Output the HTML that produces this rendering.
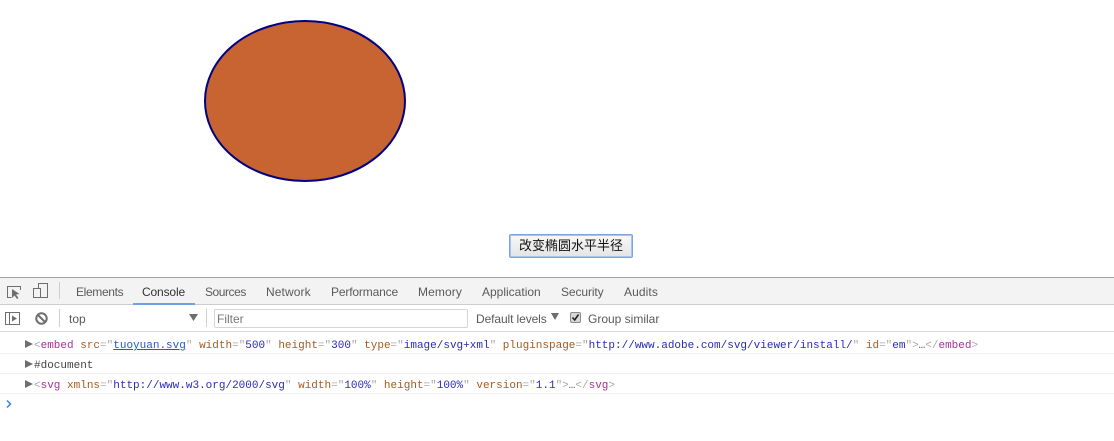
<!DOCTYPE html>
<html>
<head>
<meta charset="utf-8">
<style>
html,body{margin:0;padding:0;background:#fff;width:1114px;height:441px;overflow:hidden}
body{position:relative;font-family:"Liberation Sans","Noto Sans CJK SC",sans-serif}
.a{position:absolute;white-space:nowrap}
.t{position:absolute;top:285px;font-size:12px;line-height:14px;color:#5a5a5a;white-space:nowrap}
.m{position:absolute;left:34px;font-family:"Liberation Mono",monospace;font-size:11px;line-height:14px;white-space:pre;color:#a8a8a8}
.tag{color:#a8329a}.n{color:#a85a1c}.v{color:#2a2ab8}.arrow{position:absolute;left:25px;width:0;height:0;border-left:8px solid #6e6e6e;border-top:4px solid transparent;border-bottom:4px solid transparent}
.line{position:absolute;left:0;width:1114px;height:1px;background:#efefef}
</style>
</head>
<body>
<svg class="a" style="left:0;top:0" width="500" height="200"><ellipse cx="305" cy="101" rx="100" ry="80" fill="#c86432" stroke="#000080" stroke-width="2"/></svg>
<div class="a" style="left:509px;top:234px;width:122px;height:22px;border:1px solid #7ea3e0;box-shadow:inset 0 0 0 1px #a9c3ec;border-radius:2px;background:linear-gradient(#f8f8f8,#e4e4e4);font-size:13px;line-height:22px;text-align:center;color:#111">改变椭圆水平半径</div>

<div class="a" style="left:0;top:277px;width:1114px;height:26px;background:#f3f3f3;border-top:1px solid #a3a3a3;border-bottom:1px solid #cdcdcd"></div>
<svg class="a" style="left:0;top:278px" width="60" height="27" fill="none" stroke="#6e6e6e">
<path d="M11.500 19.500H7.500V8.500H20.500V12" stroke-width="1"/>
<path d="M12 11L12 20L14.500 17.500L17 21L18.500 20L16 16.500L19.500 16Z" fill="#6e6e6e" stroke="none"/>
<path d="M38.500 10.500V5.500H47.500V19.500H33.500V10.500H40.500V19.500" stroke-width="1"/>
<path d="M59.500 4V21" stroke="#cfcfcf"/>
</svg>
<div class="t" style="left:76px;letter-spacing:-.35px">Elements</div>
<div class="t" style="left:142px;color:#333;letter-spacing:-.15px">Console</div>
<div class="a" style="left:133px;top:303px;width:62px;height:2px;background:#6f9fe8"></div>
<div class="t" style="left:205px;letter-spacing:-.45px">Sources</div>
<div class="t" style="left:266px;letter-spacing:.1px">Network</div>
<div class="t" style="left:331px;letter-spacing:-.15px">Performance</div>
<div class="t" style="left:418px;letter-spacing:.1px">Memory</div>
<div class="t" style="left:482px">Application</div>
<div class="t" style="left:561px;letter-spacing:-.1px">Security</div>
<div class="t" style="left:624px;letter-spacing:.1px">Audits</div>

<div class="a" style="left:0;top:331px;width:1114px;height:1px;background:#dcdcdc"></div>
<svg class="a" style="left:0;top:305px" width="215" height="27" fill="none">
<rect x="5.500" y="7.500" width="14" height="12" stroke="#6e6e6e"/>
<path d="M9.500 8V19" stroke="#6e6e6e"/>
<path d="M12 10.500L17 13.500L12 16.500Z" fill="#6e6e6e"/>
<circle cx="41.500" cy="13.500" r="5.200" stroke="#6e6e6e" stroke-width="2"/>
<path d="M38 10L45 17" stroke="#6e6e6e" stroke-width="2"/>
<path d="M59.500 4V22M206.500 4V22" stroke="#cfcfcf"/>
<path d="M189 9H198L193.500 16Z" fill="#6e6e6e"/>
</svg>
<div class="t" style="left:69px;top:312px">top</div>
<div class="a" style="left:214px;top:309px;width:250px;height:17px;border:1px solid #d5d5d5;border-radius:2px;padding-left:2px;font-size:12px;line-height:19px;color:#777">Filter</div>
<div class="t" style="left:476px;top:312px;letter-spacing:-.1px">Default levels</div>
<svg class="a" style="left:550px;top:312px" width="10" height="9"><path d="M1 1H9L5 8Z" fill="#6e6e6e"/></svg>
<svg class="a" style="left:570px;top:312px" width="12" height="12"><rect x=".5" y=".5" width="10" height="10" rx="1.500" fill="#d8d8d8" stroke="#8a8a8a"/><path d="M2.500 5.500L4.700 8L8.500 2.500" fill="none" stroke="#222" stroke-width="1.600"/></svg>
<div class="t" style="left:588px;top:312px">Group similar</div>

<div class="arrow" style="top:340px"></div>
<div class="m" style="top:339px">&lt;<span class="tag">embed</span> <span class="n">src</span>="<span style="color:#1a5cc8;text-decoration:underline">tuoyuan.svg</span>" <span class="n">width</span>="<span class="v">500</span>" <span class="n">height</span>="<span class="v">300</span>" <span class="n">type</span>="<span class="v">image/svg+xml</span>" <span class="n">pluginspage</span>="<span class="v">http://www.adobe.com/svg/viewer/install/</span>" <span class="n">id</span>="<span class="v">em</span>"&gt;<span style="color:#555">…</span>&lt;/<span class="tag">embed</span>&gt;</div>
<div class="line" style="top:353px"></div>
<div class="arrow" style="top:360px"></div>
<div class="m" style="top:359px;color:#444">#document</div>
<div class="line" style="top:373px"></div>
<div class="arrow" style="top:380px"></div>
<div class="m" style="top:379px">&lt;<span class="tag">svg</span> <span class="n">xmlns</span>="<span class="v">http://www.w3.org/2000/svg</span>" <span class="n">width</span>="<span class="v">100%</span>" <span class="n">height</span>="<span class="v">100%</span>" <span class="n">version</span>="<span class="v">1.1</span>"&gt;<span style="color:#555">…</span>&lt;/<span class="tag">svg</span>&gt;</div>
<div class="line" style="top:393px"></div>
<svg class="a" style="left:5px;top:399px" width="8" height="10"><path d="M2 1.500L5.500 5L2 8.500" fill="none" stroke="#3a80e0" stroke-width="1.500"/></svg>
</body>
</html>
